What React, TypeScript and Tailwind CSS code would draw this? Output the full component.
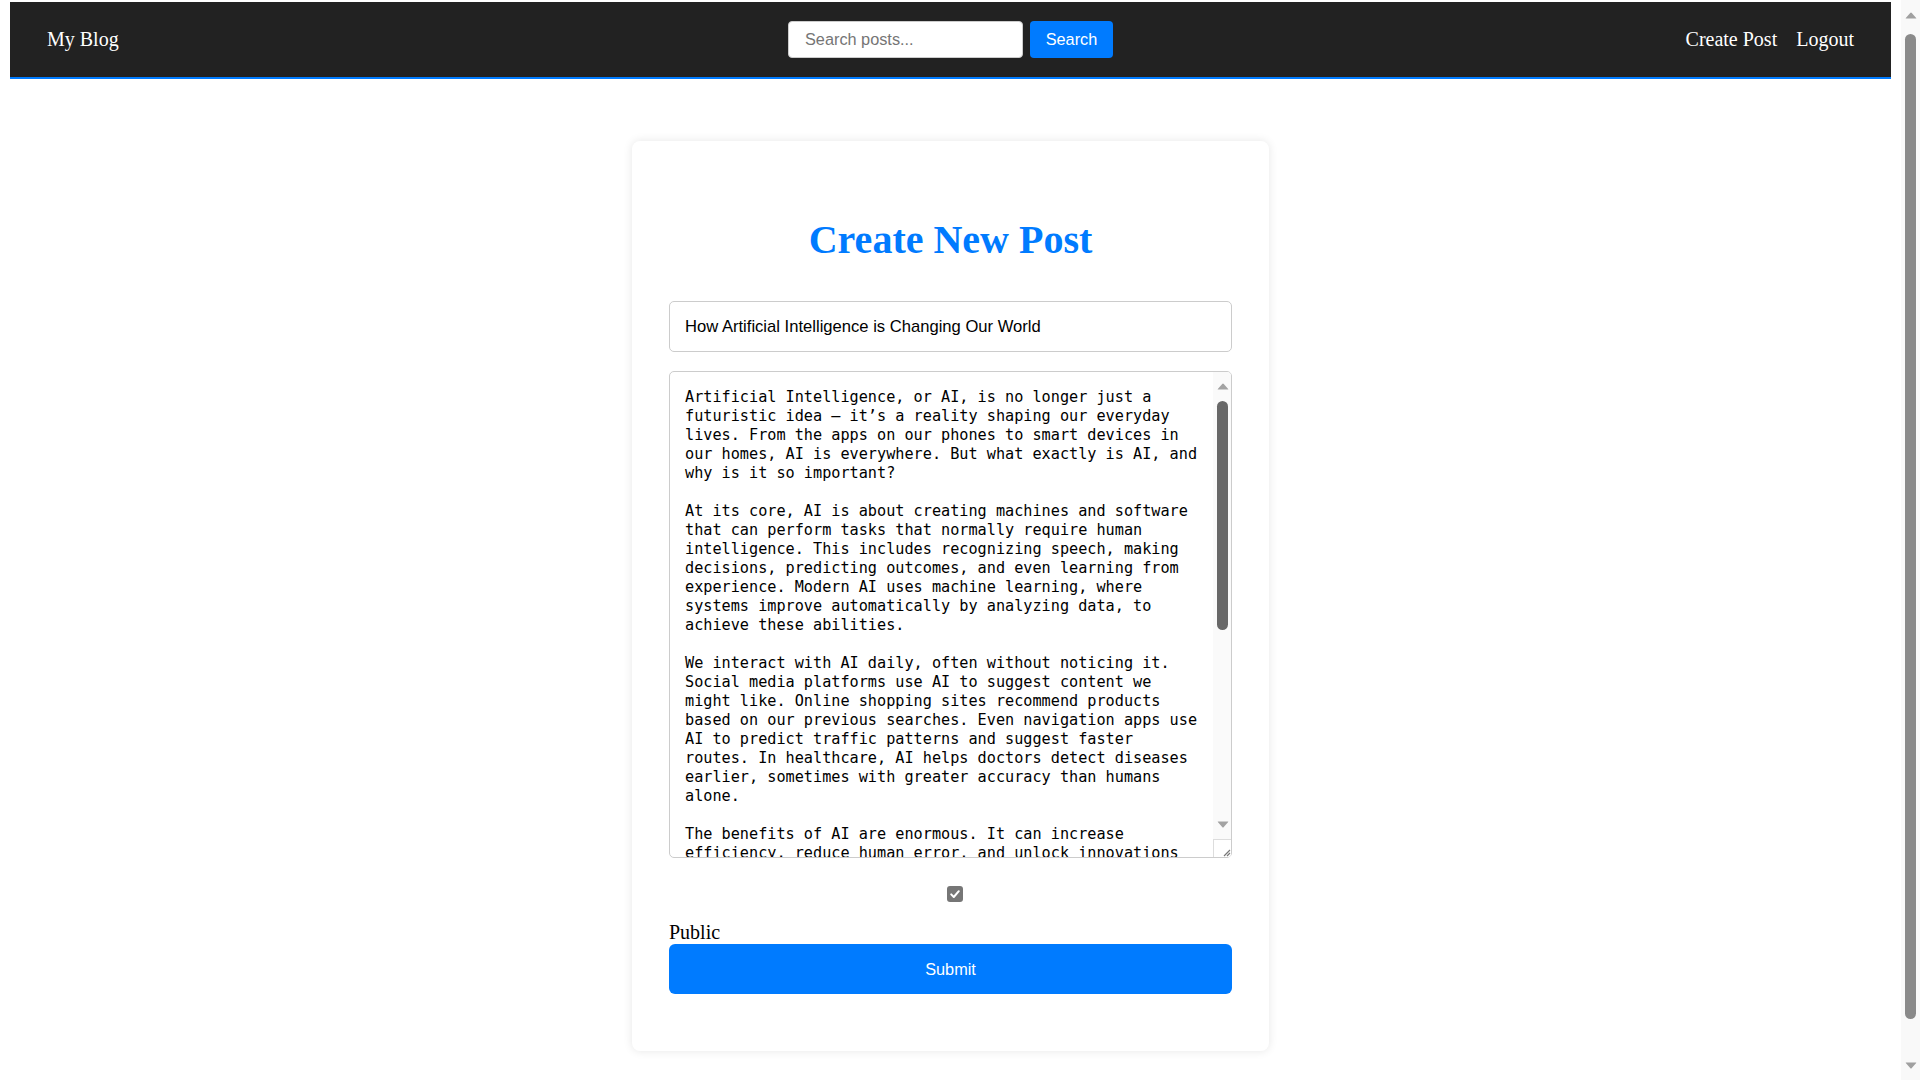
import React from "react";

const BODY = `Artificial Intelligence, or AI, is no longer just a futuristic idea — it’s a reality shaping our everyday lives. From the apps on our phones to smart devices in our homes, AI is everywhere. But what exactly is AI, and why is it so important?

At its core, AI is about creating machines and software that can perform tasks that normally require human intelligence. This includes recognizing speech, making decisions, predicting outcomes, and even learning from experience. Modern AI uses machine learning, where systems improve automatically by analyzing data, to achieve these abilities.

We interact with AI daily, often without noticing it. Social media platforms use AI to suggest content we might like. Online shopping sites recommend products based on our previous searches. Even navigation apps use AI to predict traffic patterns and suggest faster routes. In healthcare, AI helps doctors detect diseases earlier, sometimes with greater accuracy than humans alone.

The benefits of AI are enormous. It can increase efficiency, reduce human error, and unlock innovations in fields like medicine, education, and transportation. Businesses use AI to automate repetitive tasks, freeing people to focus on creative and strategic work.

However, AI also raises important questions. Concerns about privacy, job displacement, and bias in algorithms are growing. As AI systems become more powerful, it is essential to ensure they are developed responsibly and transparently.

Looking ahead, AI will continue to transform how we live, work, and connect. By understanding its potential and its limits, we can shape a future where technology truly serves humanity.

The AI revolution is only just beginning — and we are all part of it.`;

function UpArrow({ color }: { color: string }) {
  return (
    <svg width="12" height="7" viewBox="0 0 12 7">
      <path d="M6 0.5 Q6.4 0.5 6.8 1 L11.2 6 Q11.5 6.5 11 6.5 L1 6.5 Q0.5 6.5 0.8 6 L5.2 1 Q5.6 0.5 6 0.5 Z" fill={color} />
    </svg>
  );
}

function DownArrow({ color }: { color: string }) {
  return (
    <svg width="12" height="7" viewBox="0 0 12 7">
      <path d="M6 6.5 Q6.4 6.5 6.8 6 L11.2 1 Q11.5 0.5 11 0.5 L1 0.5 Q0.5 0.5 0.8 1 L5.2 6 Q5.6 6.5 6 6.5 Z" fill={color} />
    </svg>
  );
}

export default function App() {
  return (
    <div className="flex h-[1080px] overflow-hidden bg-white" style={{ fontFamily: '"Liberation Serif", serif' }}>
      <main className="w-[1901px] shrink-0">
        <nav className="mx-[10px] mt-[2px] h-[77px] bg-[#222222] border-b-2 border-[#007bff] grid grid-cols-[1fr_auto_1fr] items-center px-[37px]">
          <div className="text-white text-[20px] leading-[23px]">My Blog</div>
          <div className="flex items-center gap-[7px]">
            <input
              type="text"
              placeholder="Search posts..."
              className="w-[235px] h-[37px] bg-white rounded-[4px] border border-[#cccccc] px-[16px] text-[16.3px] text-black placeholder:text-[#757575] outline-none"
              style={{ fontFamily: '"Liberation Sans", Arial, sans-serif' }}
            />
            <button
              className="w-[83px] h-[37px] bg-[#007bff] rounded-[4px] text-white text-[16.3px]"
              style={{ fontFamily: '"Liberation Sans", Arial, sans-serif' }}
            >
              Search
            </button>
          </div>
          <div className="flex justify-end items-center gap-[19px] text-white text-[20px] leading-[23px]">
            <span>Create Post</span>
            <span>Logout</span>
          </div>
        </nav>

        <div className="flex justify-center">
          <div className="mt-[62px] w-[637px] bg-white rounded-[8px] shadow-[0_0_10px_rgba(0,0,0,0.1)] pt-[76px] px-[37px] pb-[57px] flex flex-col">
            <h1 className="h-[46px] leading-[46px] text-[40px] font-bold text-[#007bff] text-center">Create New Post</h1>
            <input
              type="text"
              defaultValue="How Artificial Intelligence is Changing Our World"
              className="mt-[38px] h-[51px] w-full border border-[#cccccc] rounded-[5px] px-[15px] text-[16.6px] text-black outline-none"
              style={{ fontFamily: '"Liberation Sans", Arial, sans-serif' }}
            />
            <div className="mt-[19px] h-[487px] w-full border border-[#cccccc] rounded-[5px] flex overflow-hidden">
              <textarea
                defaultValue={BODY}
                className="flex-1 h-full pt-[16px] pb-[14px] px-[15px] text-[15.2px] leading-[19px] text-black outline-none resize-none overflow-hidden"
                style={{ fontFamily: '"DejaVu Sans Mono", monospace' }}
              />
              <div className="w-[18px] h-full bg-[#fafafa] flex flex-col">
                <div className="h-[29px] flex items-center justify-center pl-[1px]">
                  <UpArrow color="#a3a3a3" />
                </div>
                <div className="h-[229px] w-[11px] ml-[4px] rounded-full bg-[#686868]" />
                <div className="flex-1" />
                <div className="h-[30px] flex items-center justify-center pl-[1px]">
                  <DownArrow color="#a3a3a3" />
                </div>
                <div className="h-[18px] border-t border-l border-[#dddddd] bg-white flex items-end justify-end">
                  <svg width="10" height="10" viewBox="0 0 10 10">
                    <path d="M9 3 L3 9 M9 6 L6 9" stroke="#777777" strokeWidth="1.2" />
                  </svg>
                </div>
              </div>
            </div>
            <div className="mt-[28px] h-[16px] flex justify-center pl-[9px]">
              <span className="w-[16px] h-[16px] rounded-[3px] bg-[#767676] flex items-center justify-center">
                <svg width="12" height="12" viewBox="0 0 12 12" fill="none">
                  <path d="M2.2 6.4 L4.8 9 L9.8 3.2" stroke="white" strokeWidth="2" strokeLinecap="round" strokeLinejoin="round" />
                </svg>
              </span>
            </div>
            <label className="mt-[19px] h-[23px] leading-[23px] text-[20px] text-black">Public</label>
            <button
              className="h-[50px] w-full bg-[#007bff] rounded-[6px] text-white text-[16.3px]"
              style={{ fontFamily: '"Liberation Sans", Arial, sans-serif' }}
            >
              Submit
            </button>
          </div>
        </div>
      </main>

      <div className="w-[19px] shrink-0 h-full bg-[#f9f9f9] flex flex-col">
        <div className="h-[30px] flex items-center justify-center">
          <UpArrow color="#a0a0a0" />
        </div>
        <div className="mt-[4px] h-[985px] w-[11px] mx-auto rounded-full bg-[#8a8a8a]" />
        <div className="flex-1" />
        <div className="h-[30px] flex items-center justify-center">
          <DownArrow color="#a0a0a0" />
        </div>
      </div>
    </div>
  );
}
